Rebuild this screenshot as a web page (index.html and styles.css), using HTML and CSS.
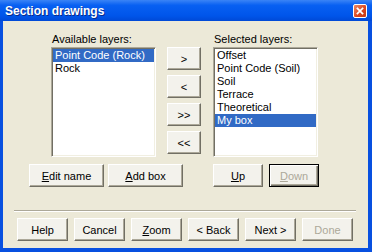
FILE: index.html
```html
<!DOCTYPE html>
<html lang="en">
<head>
  <meta charset="UTF-8">
  <title>Section drawings</title>
  <link rel="stylesheet" href="styles.css">
</head>
<body>
  <div class="window">
    <div class="titlebar">
      <span class="title">Section drawings</span>
      <span class="close">
        <svg width="14" height="14" viewBox="0 0 14 14">
          <path d="M4 4 L10 10 M10 4 L4 10" stroke="#fff" stroke-width="2" stroke-linecap="square"/>
        </svg>
      </span>
    </div>

    <div class="dialog">
      <div class="lists">
        <div class="column">
          <div class="label">Available layers:</div>
          <ul class="listbox">
            <li class="selected">Point Code (Rock)</li>
            <li>Rock</li>
          </ul>
        </div>

        <div class="arrows">
          <button class="btn arrow">&gt;</button>
          <button class="btn arrow">&lt;</button>
          <button class="btn arrow">&gt;&gt;</button>
          <button class="btn arrow">&lt;&lt;</button>
        </div>

        <div class="column">
          <div class="label">Selected layers:</div>
          <ul class="listbox">
            <li>Offset</li>
            <li>Point Code (Soil)</li>
            <li>Soil</li>
            <li>Terrace</li>
            <li>Theoretical</li>
            <li class="selected">My box</li>
          </ul>
        </div>
      </div>

      <div class="edit-row">
        <div class="group">
          <button class="btn wide"><u>E</u>dit name</button>
          <button class="btn wide"><u>A</u>dd box</button>
        </div>
        <div class="group order">
          <button class="btn small"><u>U</u>p</button>
          <button class="btn small default" disabled><u>D</u>own</button>
        </div>
      </div>

      <div class="separator"></div>

      <div class="footer">
        <button class="btn nav">Help</button>
        <button class="btn nav">Cancel</button>
        <button class="btn nav"><u>Z</u>oom</button>
        <button class="btn nav">&lt; Back</button>
        <button class="btn nav">Next &gt;</button>
        <button class="btn nav" disabled>Done</button>
      </div>
    </div>
  </div>
</body>
</html>
```

FILE: styles.css
```css
body {
  margin: 0;
  font-family: 'Liberation Sans', Arial, sans-serif;
  font-size: 11px;
  background: #ece9d8;
}

.window {
  width: 372px;
  height: 252px;
  background: #0850e0;
  display: flex;
  flex-direction: column;
}

.titlebar {
  height: 21px;
  display: flex;
  align-items: center;
  justify-content: space-between;
  padding: 0 5px 0 5px;
  background: linear-gradient(#3a84f6, #0860f2 25%, #0055ea 75%, #0049d6);
}

.title {
  color: #fff;
  font-weight: bold;
  font-size: 12px;
  text-shadow: 1px 1px 0 #0a2c8a;
  padding-top: 1px;
}

.close {
  width: 14px;
  height: 14px;
  margin-top: 1px;
  box-sizing: border-box;
  border: 1px solid #fff;
  border-radius: 2px;
  background: linear-gradient(135deg, #ee8a64, #d8441e 60%, #c43a14);
  display: flex;
  align-items: center;
  justify-content: center;
}

.close svg {
  width: 12px;
  height: 12px;
}

.dialog {
  flex: 1;
  background: #ece9d8;
  margin: 0 4px 4px 3px;
  padding: 12px 0 0 0;
  display: flex;
  flex-direction: column;
}

.lists {
  display: flex;
  align-items: flex-start;
  padding-left: 48px;
}

.column {
  display: flex;
  flex-direction: column;
}

.label {
  height: 14px;
  line-height: 13px;
  color: #000;
  padding-left: 1px;
}

.listbox {
  list-style: none;
  margin: 0;
  padding: 1px;
  width: 105px;
  height: 110px;
  box-sizing: border-box;
  background: #fff;
  border: 1px solid;
  border-color: #aca899 #fff #fff #aca899;
  box-shadow: inset 1px 1px 0 #716f64, inset -1px -1px 0 #f1efe2;
}

.listbox li {
  height: 13px;
  line-height: 13px;
  padding-left: 2px;
  white-space: nowrap;
  color: #000;
}

.listbox li.selected {
  background: #316ac5;
  color: #fff;
}

.arrows {
  display: flex;
  flex-direction: column;
  gap: 5px;
  margin: 14px 12px 0 11px;
}

.btn {
  font-family: 'Liberation Sans', Arial, sans-serif;
  font-size: 11px;
  color: #000;
  height: 23px;
  padding: 0;
  box-sizing: border-box;
  background: #f3f2ec;
  border: 1px solid;
  border-color: #fff #716f64 #716f64 #fff;
  box-shadow: inset -1px -1px 0 #aca899;
  border-radius: 0;
}

.btn:disabled {
  color: #aca899;
}

.btn.default {
  border: 1px solid #000;
  box-shadow: inset 1px 1px 0 #fff, inset -1px -1px 0 #716f64, inset -2px -2px 0 #aca899;
}

.arrow {
  width: 34px;
}

.edit-row {
  display: flex;
  margin-top: 7px;
  padding-left: 26px;
}

.group {
  display: flex;
  gap: 4px;
}

.order {
  gap: 6px;
  margin-left: 30px;
}

.wide {
  width: 75px;
}

.small {
  width: 50px;
}

.separator {
  margin: 23px 12px 0 11px;
  height: 0;
  border-top: 1px solid #aca899;
  border-bottom: 1px solid #fff;
}

.footer {
  display: flex;
  gap: 6px;
  margin-top: 6px;
  padding-left: 14px;
}

.nav {
  width: 51px;
}
```
